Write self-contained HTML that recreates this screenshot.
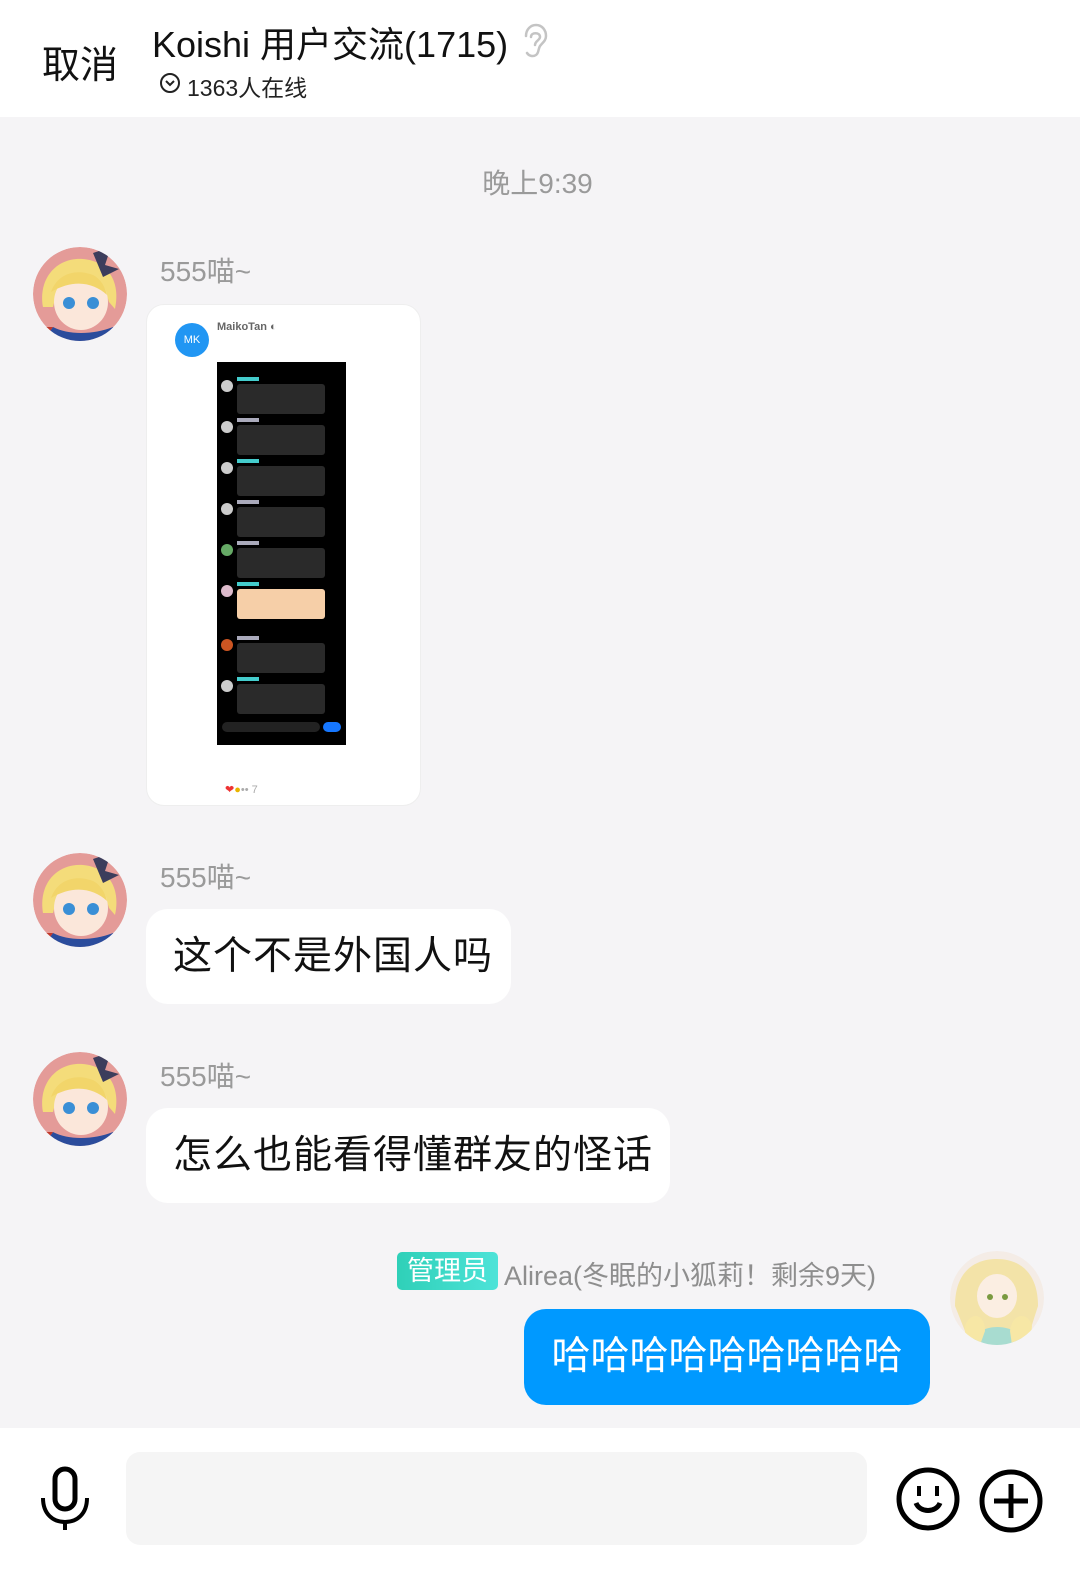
<!DOCTYPE html>
<html><head><meta charset="utf-8"><style>
*{margin:0;padding:0;box-sizing:border-box}
body{width:1080px;height:1576px;background:#f5f4f6;font-family:"Liberation Sans","Noto Sans CJK SC",sans-serif;position:relative;overflow:hidden}
.a{position:absolute}
.hdr{left:0;top:0;width:1080px;height:117px;background:#fff}
.name{color:#9a9a9a;font-size:28px}
.bub{background:#fff;border-radius:22px;font-size:39px;color:#111;line-height:95px;padding-left:27px;letter-spacing:1px}
.av{width:94px;height:94px;border-radius:50%;overflow:hidden}
.row{position:absolute;left:20px;width:88px;height:30px;background:#2a2a2a;border-radius:3px}
.dot{position:absolute;left:4px;width:12px;height:12px;border-radius:50%;background:#ccc}
.tg{position:absolute;left:20px;width:22px;height:4px;background:#4cc}
</style></head><body>
<div class="a hdr"></div>
<div class="a" style="left:42px;top:34px;font-size:38px;color:#111">取消</div>
<div class="a" style="left:152px;top:16px;font-size:36px;color:#111">Koishi 用户交流(1715)</div>
<svg class="a" style="left:518px;top:22px" width="32" height="38" viewBox="0 0 32 38"><path d="M8 14 C8 7 13 3 18 3 C24 3 28 8 28 14 C28 19 24 21 22 24 C20 27 21 31 18 33 C15 35 11 34 9 31" fill="none" stroke="#c4c4c4" stroke-width="2.5" stroke-linecap="round"/><path d="M13 15 C13 10 22 10 22 15 C22 18 17 19 17 23" fill="none" stroke="#c4c4c4" stroke-width="2.5" stroke-linecap="round"/></svg>
<svg class="a" style="left:159px;top:72px" width="22" height="22" viewBox="0 0 22 22"><circle cx="11" cy="11" r="9" fill="none" stroke="#222" stroke-width="2"/><path d="M7 9 L11 13 L15 9" fill="none" stroke="#222" stroke-width="2"/></svg>
<div class="a" style="left:187px;top:69px;font-size:23px;color:#222">1363人在线</div>

<div class="a" style="left:0;top:162px;width:1075px;text-align:center;font-size:28px;color:#9a9a9a">晚上9:39</div>

<svg width="0" height="0" style="position:absolute"><defs>
<g id="ava">
<circle cx="47" cy="47" r="47" fill="#e49b98"/>
<path d="M10 60 C5 30 25 10 50 12 C75 14 88 35 82 62 L76 55 C72 40 62 32 50 32 C36 32 24 42 20 60 Z" fill="#f4dc7a"/>
<ellipse cx="48" cy="55" rx="27" ry="28" fill="#fbe7da"/>
<path d="M18 45 C25 25 45 22 60 28 C68 32 72 40 74 48 C60 35 40 32 18 45Z" fill="#f2d56a"/>
<circle cx="36" cy="56" r="6" fill="#3a8fd6"/><circle cx="60" cy="56" r="6" fill="#3a8fd6"/>
<path d="M60 6 L78 0 L72 18 L86 22 L70 30 Z" fill="#3c3d5c"/>
<path d="M10 94 L20 80 C35 88 60 88 80 80 L90 94 Z" fill="#2b4c9c"/>
<path d="M20 80 L10 94 L0 94 L0 80Z" fill="#c0392b"/>
</g>
<g id="avb">
<circle cx="47" cy="47" r="47" fill="#f4ece6"/>
<path d="M5 55 C5 20 25 8 47 8 C70 8 88 22 88 55 L80 80 L15 80Z" fill="#f3e3a8"/>
<ellipse cx="47" cy="45" rx="20" ry="22" fill="#fbeee2"/>
<path d="M20 94 C25 70 70 70 75 94Z" fill="#a8dcd0"/>
<path d="M15 75 C20 60 35 62 35 80 L30 94 L15 94Z" fill="#f7e7a5"/>
<path d="M60 80 C62 62 78 60 82 75 L80 94 L62 94Z" fill="#f7e7a5"/>
<circle cx="40" cy="46" r="3" fill="#7a9a40"/><circle cx="55" cy="46" r="3" fill="#7a9a40"/>
</g></defs></svg>

<svg class="a av" style="left:33px;top:247px" viewBox="0 0 94 94"><use href="#ava"/></svg>
<div class="a name" style="left:160px;top:250px">555喵~</div>
<div class="a" style="left:146px;top:304px;width:275px;height:502px;background:#fff;border-radius:18px;border:1px solid #eee">
 <div class="a" style="left:28px;top:18px;width:34px;height:34px;border-radius:50%;background:#2196f3;color:#fff;font-size:11px;text-align:center;line-height:34px">MK</div>
 <div class="a" style="left:70px;top:16px;font-size:11px;font-weight:bold;color:#666">MaikoTan ◐</div>
 <div class="a" style="left:70px;top:57px;width:129px;height:383px;background:#000">
  <div class="dot" style="top:18px"></div><div class="tg" style="top:15px"></div><div class="row" style="top:22px"></div>
  <div class="dot" style="top:59px"></div><div class="tg" style="top:56px;background:#aab"></div><div class="row" style="top:63px"></div>
  <div class="dot" style="top:100px"></div><div class="tg" style="top:97px"></div><div class="row" style="top:104px"></div>
  <div class="dot" style="top:141px"></div><div class="tg" style="top:138px;background:#aab"></div><div class="row" style="top:145px"></div>
  <div class="dot" style="top:182px;background:#6a6"></div><div class="tg" style="top:179px;background:#aab"></div><div class="row" style="top:186px"></div>
  <div class="dot" style="top:223px;background:#dbc"></div><div class="tg" style="top:220px"></div><div class="row" style="top:227px;background:#f6cfa8"></div>
  <div class="dot" style="top:277px;background:#c52"></div><div class="tg" style="top:274px;background:#aab"></div><div class="row" style="top:281px"></div>
  <div class="dot" style="top:318px"></div><div class="tg" style="top:315px"></div><div class="row" style="top:322px"></div>
  <div class="a" style="left:5px;top:360px;width:98px;height:10px;background:#222;border-radius:5px"></div>
  <div class="a" style="left:106px;top:360px;width:18px;height:10px;background:#1677ff;border-radius:5px"></div>
 </div>
 <div class="a" style="left:78px;top:478px;font-size:11px;color:#aaa"><span style="color:#e33">❤</span><span style="color:#e8b400">●</span>•• 7</div>
</div>

<svg class="a av" style="left:33px;top:853px" viewBox="0 0 94 94"><use href="#ava"/></svg>
<div class="a name" style="left:160px;top:856px">555喵~</div>
<div class="a bub" style="left:146px;top:909px;width:365px;height:95px">这个不是外国人吗</div>

<svg class="a av" style="left:33px;top:1052px" viewBox="0 0 94 94"><use href="#ava"/></svg>
<div class="a name" style="left:160px;top:1055px">555喵~</div>
<div class="a bub" style="left:146px;top:1108px;width:524px;height:95px">怎么也能看得懂群友的怪话</div>

<div class="a" style="left:397px;top:1252px;width:101px;height:38px;border-radius:5px;background:linear-gradient(90deg,#2fd0b8,#4de3d8);color:#fff;font-size:27px;text-align:center;line-height:38px">管理员</div>
<div class="a name" style="left:504px;top:1254px;font-size:27px;color:#8e8e8e">Alirea(冬眠的小狐莉！剩余9天)</div>
<svg class="a av" style="left:950px;top:1251px" viewBox="0 0 94 94"><use href="#avb"/></svg>
<div class="a" style="left:524px;top:1309px;width:406px;height:96px;border-radius:22px;background:#0099ff;color:#fff;font-size:39px;line-height:96px;text-align:center">哈哈哈哈哈哈哈哈哈</div>

<div class="a" style="left:0;top:1428px;width:1080px;height:148px;background:#fff"></div>
<div class="a" style="left:126px;top:1452px;width:741px;height:93px;background:#f5f5f5;border-radius:14px"></div>
<svg class="a" style="left:38px;top:1466px" width="56" height="66" viewBox="0 0 56 66"><rect x="17" y="3" width="20" height="40" rx="10" fill="none" stroke="#000" stroke-width="5"/><path d="M5 32 C5 48 15 56 27 56 C39 56 49 48 49 32" fill="none" stroke="#000" stroke-width="4"/><path d="M27 56 L27 64" stroke="#000" stroke-width="4"/></svg>
<svg class="a" style="left:895px;top:1466px" width="66" height="66" viewBox="0 0 66 66"><circle cx="33" cy="33" r="29" fill="none" stroke="#000" stroke-width="5"/><path d="M24 20 V30 M42 20 V30" stroke="#000" stroke-width="4"/><path d="M21 37 C25 47 41 47 45 37" fill="none" stroke="#000" stroke-width="5"/></svg>
<svg class="a" style="left:978px;top:1468px" width="66" height="66" viewBox="0 0 66 66"><circle cx="33" cy="33" r="29" fill="none" stroke="#000" stroke-width="5"/><path d="M33 16 V50 M16 33 H50" stroke="#000" stroke-width="5"/></svg>
</body></html>
